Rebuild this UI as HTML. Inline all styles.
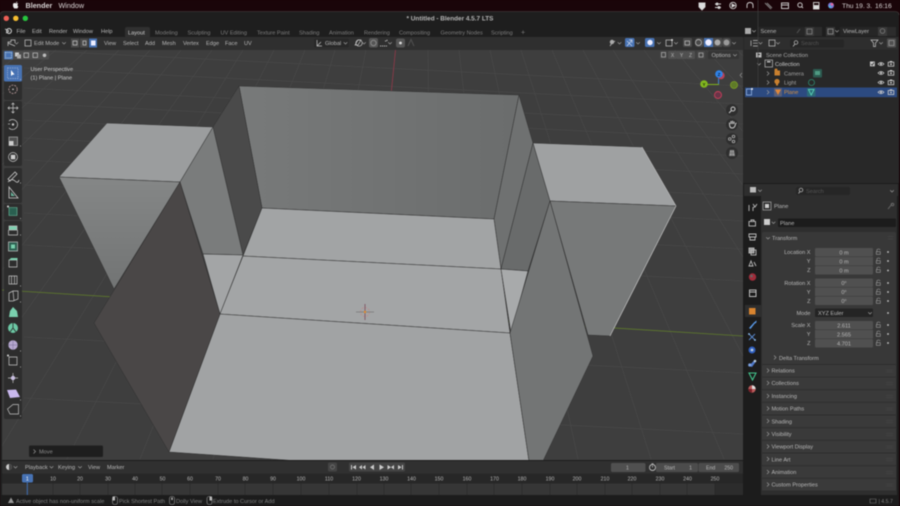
<!DOCTYPE html>
<html><head><meta charset="utf-8">
<style>
html,body{margin:0;padding:0;background:#1a0509;width:900px;height:506px;overflow:hidden}
svg{display:block;filter:blur(.42px)}
text{font-family:"Liberation Sans",sans-serif;font-size:5.6px;fill:#b8b8b8}
.d{fill:#7e7e7e}.s{font-size:5.2px}.c{text-anchor:middle}.r{text-anchor:end}
.g line{stroke:#4a4a4a;stroke-width:.6}
.m{stroke:#303030;stroke-width:.5;stroke-linejoin:round}
.i{fill:none;stroke:#c4c4c4;stroke-width:.7}
.p{fill:#3a3a3a}
</style></head><body>
<svg width="900" height="506" viewBox="0 0 900 506" xmlns="http://www.w3.org/2000/svg">
<defs>
<linearGradient id="lf" x1="0" y1="0" x2="0" y2="1"><stop offset="0" stop-color="#858787"/><stop offset="1" stop-color="#727474"/></linearGradient>
<linearGradient id="bw" x1="0" y1="0" x2="1" y2="0"><stop offset="0" stop-color="#787a7a"/><stop offset="1" stop-color="#6b6d6d"/></linearGradient>
<clipPath id="vp"><rect x="2" y="50" width="741" height="410"/></clipPath>
<g id="eye"><path d="M-3 0Q0 -3 3 0Q0 3 -3 0Z" fill="none" stroke="#ccc" stroke-width=".7"/><circle r="1" fill="#ccc"/></g>
<g id="cam"><rect x="-2.8" y="-1.8" width="5.6" height="4" fill="none" stroke="#ccc" stroke-width=".8"/><rect x="-1.2" y="-3" width="2.4" height="1.2" fill="#ccc"/><circle cy=".2" r=".9" fill="#ccc"/></g>
<g id="lock"><rect x="-2.2" y="-.3" width="4" height="2.6" fill="none" stroke="#999" stroke-width=".6"/><path d="M-1.6 -.3V-1.8Q-1.6 -3 0 -3Q1.4 -3 1.6 -2" fill="none" stroke="#999" stroke-width=".6"/></g>
<g id="arrow"><path d="M-1 -2L1 0L-1 2" fill="none" stroke="#999" stroke-width=".7"/></g>
<g id="chev"><path d="M-1.8 -.8L0 1L1.8 -.8" fill="none" stroke="#999" stroke-width=".7"/></g>
</defs>

<!-- mac menu bar -->
<rect width="900" height="506" fill="#1a0509"/>
<path d="M13.5 3.2Q15 2.7 16 3.4Q17 2.7 18.2 3.5Q17 4.6 17.6 5.8L18.3 6.6Q17.6 8.6 16.6 8.6L15.8 8.3L15 8.6Q13.6 8.4 13 6Q12.8 3.8 13.5 3.2ZM15.9 3.1Q16 1.8 17.2 1.5Q17.3 2.8 15.9 3.1Z" fill="#e8e8e8"/>
<text x="25.5" y="8" style="font-size:7.2px;font-weight:bold;fill:#d8d4d4">Blender</text>
<text x="58.5" y="8" style="font-size:7.2px;fill:#d8d4d4">Window</text>
<g fill="none" stroke="#d4d4d4" stroke-width=".9">
<path d="M699 3H705V7L702 10L699 7Z" fill="#ddd"/>
<path d="M715 4H721M715 7.5H721"/><circle cx="717" cy="4" r="1" fill="#ddd"/><circle cx="719" cy="7.5" r="1" fill="#ddd"/>
<circle cx="733" cy="5.5" r="3.2"/><path d="M732 4L735 5.5L732 7Z" fill="#ddd"/>
<path d="M747 8V5.5Q747 2.5 750 2.5Q753 2.5 753 5.5V8"/>
<path d="M765 3L771 9M767 3L772 8" stroke="#888"/>
<rect x="781.5" y="3" width="7" height="5.5"/><path d="M781.5 5H788.5"/>
<circle cx="800" cy="5" r="2.2"/><path d="M801.6 6.6L803 8"/>
<rect x="813.5" y="2.5" width="5.5" height="3"/><rect x="813.5" y="6" width="5.5" height="3" fill="#ddd"/>
</g>
<circle cx="831" cy="5.5" r="3" fill="#7a7ad8"/><circle cx="832" cy="4.3" r="1.3" fill="#e66a9a"/><circle cx="830" cy="6.8" r="1.2" fill="#4ac0d8"/>
<text x="842" y="8" style="font-size:6.7px;fill:#d8d4d4">Thu 19. 3.</text><text x="875" y="8" style="font-size:6.7px;fill:#d8d4d4">16:16</text>

<!-- window -->
<path d="M0 15Q0 11.5 4 11.5H895Q899 11.5 899 15V506H0Z" fill="#1e1e1e"/>
<path d="M0 15Q0 11.5 4 11.5H895Q899 11.5 899 15" fill="none" stroke="#4a4444" stroke-width=".6"/>
<circle cx="6.3" cy="18.3" r="2.7" fill="#ed5f56"/><circle cx="15.8" cy="18.3" r="2.7" fill="#f5bd30"/><circle cx="25.3" cy="18.3" r="2.7" fill="#27c53f"/>
<text x="450" y="20.4" class="c" style="font-size:6.4px;font-weight:bold;fill:#b4b4b4">* Untitled - Blender 4.5.7 LTS</text>

<!-- top bar -->
<circle cx="9" cy="31" r="2.4" fill="none" stroke="#ccc" stroke-width="1.1"/><path d="M5 29L9 31M6 33L9 31" stroke="#ccc" stroke-width=".9"/>
<text x="16.5" y="33">File</text><text x="32" y="33">Edit</text><text x="49" y="33">Render</text><text x="73" y="33">Window</text><text x="101" y="33">Help</text>
<path d="M125 37V29Q125 27 127 27H148Q150 27 150 29V37Z" fill="#303030"/>
<text x="128" y="34.5" style="fill:#d0d0d0">Layout</text>
<text class="d" x="155" y="34.5">Modeling</text><text class="d" x="187.5" y="34.5">Sculpting</text><text class="d" x="220.5" y="34.5">UV Editing</text><text class="d" x="257" y="34.5">Texture Paint</text><text class="d" x="299" y="34.5">Shading</text><text class="d" x="329" y="34.5">Animation</text><text class="d" x="364" y="34.5">Rendering</text><text class="d" x="399" y="34.5">Compositing</text><text class="d" x="440.5" y="34.5">Geometry Nodes</text><text class="d" x="491" y="34.5">Scripting</text><text class="d" x="521" y="34.5" style="font-size:7px">+</text>

<!-- viewport -->
<rect x="2" y="50" width="741" height="410" fill="#3e3e3e"/>
<g clip-path="url(#vp)">
<g class="g">
<line x1="24" y1="50" x2="743" y2="86"/><line x1="24" y1="68" x2="743" y2="104"/><line x1="24" y1="88" x2="743" y2="124"/><line x1="24" y1="103" x2="743" y2="139"/><line x1="24" y1="120" x2="743" y2="156"/><line x1="24" y1="138" x2="743" y2="174"/><line x1="24" y1="160" x2="743" y2="196"/><line x1="24" y1="185" x2="743" y2="221"/><line x1="24" y1="213" x2="743" y2="249"/><line x1="24" y1="245" x2="743" y2="281"/><line x1="24" y1="337" x2="743" y2="373"/><line x1="24" y1="398" x2="743" y2="434"/>
<line x1="25" y1="50" x2="-517" y2="459"/><line x1="56" y1="50" x2="-444" y2="459"/><line x1="87" y1="50" x2="-371" y2="459"/><line x1="119" y1="50" x2="-298" y2="459"/><line x1="150" y1="50" x2="-225" y2="459"/><line x1="181" y1="50" x2="-152" y2="459"/><line x1="212" y1="50" x2="-79" y2="459"/><line x1="243" y1="50" x2="-6" y2="459"/><line x1="274" y1="50" x2="67" y2="459"/><line x1="305" y1="50" x2="140" y2="459"/><line x1="335" y1="50" x2="213" y2="459"/><line x1="366" y1="50" x2="286" y2="459"/><line x1="428" y1="50" x2="432" y2="459"/><line x1="459" y1="50" x2="505" y2="459"/><line x1="490" y1="50" x2="578" y2="459"/><line x1="521" y1="50" x2="651" y2="459"/><line x1="552" y1="50" x2="724" y2="459"/><line x1="583" y1="50" x2="797" y2="459"/><line x1="613" y1="50" x2="870" y2="459"/><line x1="644" y1="50" x2="943" y2="459"/><line x1="675" y1="50" x2="1016" y2="459"/><line x1="706" y1="50" x2="1089" y2="459"/><line x1="737" y1="50" x2="1162" y2="459"/>
</g>
<line x1="2" y1="290" x2="743" y2="336" stroke="#5f7a2c" stroke-width=".8"/>
<line x1="395.5" y1="50" x2="391" y2="95" stroke="#95384a" stroke-width=".8"/>

<!-- mesh -->
<g class="m">
<polygon points="239,86 519,95 494,219 262,208" fill="url(#bw)"/>
<polygon points="239,86 213,127 243,255 262,208" fill="#4a4a4a"/>
<polygon points="519,95 533,143 501,269 494,219" fill="#6f7171"/>
<polygon points="533,143 550,201 528,271 501,269" fill="#696b6b"/>
<polygon points="107,123 213,127 180,182 59,177" fill="#9b9d9e"/>
<polygon points="59,177 180,182 114,289" fill="url(#lf)"/>
<polygon points="213,127 180,182 203,254 243,255" fill="#7a7c7c"/>
<polygon points="203,254 243,255 220,314" fill="#a3a5a6"/>
<polygon points="262,208 494,219 501,269 243,256" fill="#a2a4a5"/>
<polygon points="243,256 501,269 510,333 220,314" fill="#a3a5a6"/>
<polygon points="501,269 528,271 511,333" fill="#a8aaab"/>
<polygon points="220,314 510,333 529,461 300,461 169,452" fill="#a1a3a4"/>
<polygon points="180,182 220,314 169,452 94,323" fill="#4a4747"/>
<polygon points="533,143 642,147 676,206 550,201" fill="#9fa1a2"/>
<polygon points="550,201 676,206 610,336 588,335" fill="#777979"/>
<polygon points="550,201 593,356 543,461 529,461 510,333" fill="#737575"/>
</g>
<line x1="642" y1="147" x2="676" y2="206" stroke="#cfcfcf" stroke-width=".6"/>
<line x1="676" y1="206" x2="610" y2="336" stroke="#d8d8d8" stroke-width=".6"/>
</g>

<!-- 3D cursor -->
<g transform="translate(365 312)">
<circle r="4.5" fill="none" stroke="#c08a8a" stroke-width=".8" stroke-dasharray="2 1.5"/>
<path d="M-9 0H9" stroke="#777" stroke-width=".7"/><path d="M0 -8V8" stroke="#7a4a5a" stroke-width=".8"/>
<circle r="1.2" fill="#e08a30"/>
</g>

<!-- viewport header -->
<rect x="2" y="37" width="741" height="13" fill="#2f2f2f"/>
<path d="M8 46V42H11V40H15V43M8 43L15 46" class="i"/>
<rect x="25" y="40" width="6" height="6" class="i"/>
<use href="#chev" x="16.5" y="43"/>
<text x="34" y="45">Edit Mode</text><use href="#chev" x="64" y="43"/>
<rect x="71" y="38.5" width="8" height="9" fill="#4a4a4a"/><rect x="80" y="38.5" width="8" height="9" fill="#4a4a4a"/><rect x="89" y="38.5" width="8" height="9" fill="#4772b3"/>
<path d="M73 41H77V45H73Z" class="i"/><path d="M83 41H86V45H83Z" class="i"/><rect x="91" y="40.5" width="4.5" height="5" fill="#eef"/>
<text x="104" y="45">View</text><text x="123" y="45">Select</text><text x="145" y="45">Add</text><text x="162" y="45">Mesh</text><text x="183" y="45">Vertex</text><text x="206" y="45">Edge</text><text x="225" y="45">Face</text><text x="244" y="45">UV</text>
<rect x="314" y="38.5" width="35" height="9" rx="2" fill="#282828"/>
<path d="M317 40V46H322M317 46L321 42" class="i"/><text x="325" y="45">Global</text><use href="#chev" x="345.5" y="43"/>
<path d="M355 45L358 40H361L358 45Z" class="i"/><circle cx="359" cy="43" r="3.2" class="i"/><use href="#chev" x="364" y="43"/>
<rect x="369" y="38" width="9" height="9.5" rx="2" fill="#555"/><circle cx="373.5" cy="43" r="2.7" fill="none" stroke="#888"/>
<path d="M380 46H387M385 41H387V39" fill="none" stroke="#bbb" stroke-width="1" stroke-dasharray="1.2 .8"/><use href="#chev" x="390" y="43"/>
<rect x="396" y="38.5" width="9" height="9" rx="2" fill="#555"/><circle cx="400.5" cy="43" r="1.4" fill="#ddd"/>
<path d="M408 46L411 39.5L414 46" fill="none" stroke="#4f4f4f"/>

<circle cx="612" cy="42" r="2.2" fill="#aaa"/><path d="M610 46L612 43L615 41" stroke="#aaa" fill="none"/><use href="#chev" x="619.5" y="43"/>
<rect x="625" y="38" width="9.5" height="9" rx="1.5" fill="#4772b3"/><path d="M627 46L632 40M629 40H632V43M627 41L632 46" fill="none" stroke="#cdd6e8" stroke-width=".7"/>
<use href="#chev" x="638" y="43"/>
<rect x="645" y="38" width="9.5" height="9" rx="1.5" fill="#4772b3"/><circle cx="650" cy="42.5" r="2.7" fill="#eef"/>
<use href="#chev" x="659" y="43"/>
<rect x="666" y="40" width="6" height="6" class="i"/><circle cx="672" cy="40" r="1" fill="#ddd"/><use href="#chev" x="676" y="43"/>
<rect x="683" y="38" width="9" height="9" rx="1.5" fill="#4a4a4a"/><rect x="685" y="41" width="4.5" height="4" class="i"/>
<rect x="695" y="38" width="9" height="9" rx="3" fill="#4a4a4a"/><rect x="704" y="38" width="9" height="9" fill="#4a4a4a"/><rect x="713" y="38" width="9" height="9" fill="#4a4a4a"/><rect x="722" y="38" width="9" height="9" rx="3" fill="#4a4a4a"/>
<circle cx="698.5" cy="42.5" r="3" class="i"/><rect x="704" y="38" width="9" height="9" fill="#4772b3"/><circle cx="708.5" cy="42.5" r="3.2" fill="#eef"/><circle cx="717.5" cy="42.5" r="3" fill="#aaa"/><circle cx="726.5" cy="42.5" r="3" fill="#999"/>
<use href="#chev" x="734" y="43"/>

<!-- mesh select row -->
<rect x="4" y="51" width="9" height="8.5" rx="1.3" fill="#4772b3"/><rect x="5.5" y="52.5" width="6" height="5.5" fill="none" stroke="#cdd" stroke-width=".7" stroke-dasharray="1 .7"/>
<rect x="13" y="51" width="9" height="8.5" fill="#4c4c4c"/><rect x="22" y="51" width="9" height="8.5" fill="#4c4c4c"/><rect x="31" y="51" width="9" height="8.5" fill="#4c4c4c"/><rect x="40" y="51" width="9" height="8.5" rx="1.3" fill="#4c4c4c"/>
<rect x="15" y="52.5" width="4" height="4" fill="#ccc"/><rect x="17" y="54.5" width="4" height="4" fill="#aaa"/>
<rect x="24" y="53" width="4.5" height="4.5" class="i"/><rect x="33" y="53" width="4.5" height="4.5" class="i"/><circle cx="44.5" cy="55.3" r="1.8" fill="#bbb"/>
<text x="30.5" y="71" style="fill:#ccc">User Perspective</text>
<text x="30.5" y="79.3" style="fill:#ccc">(1) Plane | Plane</text>

<!-- xyz options -->
<rect x="660" y="51" width="7" height="8" rx="1" fill="#474747"/><rect x="661.5" y="52.5" width="4" height="4.5" class="i" style="stroke-width:.6"/>
<rect x="668" y="51" width="9" height="8" rx="1" fill="#505050"/><rect x="677" y="51" width="9" height="8" fill="#505050"/><rect x="686" y="51" width="9" height="8" rx="1" fill="#505050"/>
<text x="672.5" y="57" class="c" style="font-size:5px">X</text><text x="681.5" y="57" class="c" style="font-size:5px">Y</text><text x="690.5" y="57" class="c" style="font-size:5px">Z</text>
<rect x="697" y="51" width="8" height="8" rx="1" fill="#474747"/><rect x="699" y="53" width="4" height="4" class="i" style="stroke-width:.6"/>
<rect x="708" y="51" width="31" height="8" rx="1.5" fill="#353535"/>
<text x="711.5" y="57">Options</text><use href="#chev" x="735" y="55"/>
<path d="M742 73L740 75.3L742 77.5" fill="none" stroke="#999" stroke-width=".6"/>

<!-- gizmo -->
<path d="M704 84.5H718.5V74" fill="none" stroke="#7fb31c" stroke-width="1"/><path d="M718.6 84V75" stroke="#3a78d8" stroke-width="1"/>
<circle cx="721" cy="75.5" r="3.7" fill="#b94058"/>
<circle cx="719" cy="74" r="3.8" fill="#2f83e8"/><text x="719" y="75.8" class="c" style="font-size:4.6px;font-weight:bold;fill:#102040">Z</text>
<circle cx="704" cy="84" r="3.8" fill="#82b81f"/><text x="704" y="85.8" class="c" style="font-size:4.6px;font-weight:bold;fill:#20300a">Y</text>
<circle cx="734" cy="85" r="3.5" fill="#5f7a28" stroke="#7da024" stroke-width=".8"/>
<circle cx="718" cy="95" r="3.5" fill="#6a3448" stroke="#c83f5a" stroke-width=".9"/>
<g fill="#2e2e2e"><circle cx="732" cy="110" r="6"/><circle cx="732" cy="124.5" r="6"/><circle cx="732" cy="139" r="6"/><circle cx="732" cy="153" r="6"/></g>
<circle cx="733" cy="109" r="2" fill="none" stroke="#ccc" stroke-width="1"/><path d="M731.5 110.5L729 113" stroke="#ccc" stroke-width="1"/>
<path d="M729.5 124V122.5M731 124V121M732.5 124V120.8M734 124V121.5M729.5 124Q729.5 128 732 128Q735 128 735.5 124L736.3 122.8" fill="none" stroke="#ccc" stroke-width="1"/>
<circle cx="729.8" cy="139" r="1.3" class="i"/><circle cx="733.5" cy="136.5" r="1.3" class="i"/><circle cx="733.5" cy="141.5" r="1.3" class="i"/>
<path d="M729 156L730 150H734L735 156ZM729 153H735M732 150V156" fill="#999" stroke="#555" stroke-width=".4"/>

<!-- toolbar -->
<rect x="4" y="65" width="18" height="35" rx="1.5" fill="#2d2d2d"/>
<rect x="4" y="65" width="18" height="16.5" rx="1.5" fill="#4772b3"/>
<rect x="7.5" y="68" width="10.5" height="10.5" fill="none" stroke="#a5b9da" stroke-width=".7" stroke-dasharray="1.3 1"/>
<path d="M11 70V76L12.5 74.8L14.5 74.5Z" fill="#fff"/>
<circle cx="13" cy="89.3" r="4.2" fill="none" stroke="#b89a9a" stroke-width=".8" stroke-dasharray="2 1"/><circle cx="13" cy="89.3" r=".8" fill="#ccc"/>
<rect x="4" y="101" width="18" height="65" rx="1.5" fill="#2d2d2d"/>
<path d="M13 103V113M8 108H18M11.5 104.500L13 103L14.500 104.500M11.500 111.500L13 113L14.500 111.500M9.500 106.500L8 108L9.500 109.500M16.500 106.500L18 108L16.500 109.500" class="i"/>
<path d="M9 121A5 5 0 1 1 9 128" class="i"/><circle cx="13" cy="124.500" r="1.200" fill="#ccc"/><path d="M8 124H10" class="i"/>
<rect x="9" y="137" width="8.500" height="8.500" fill="#505050" stroke="#bbb" stroke-width=".6"/><rect x="9" y="141" width="4.500" height="4.500" fill="#ccc"/>
<circle cx="13" cy="157" r="4.500" class="i"/><rect x="10.800" y="154.800" width="4.500" height="4.500" fill="#ccc"/>
<rect x="4" y="168" width="18" height="35" rx="1.500" fill="#2d2d2d"/>
<path d="M8 179L15 172L17 174L10 181ZM8 182Q12 178 15 181T19 180" fill="none" stroke="#ccc" stroke-width=".8"/>
<path d="M9 187V198H18Z" fill="none" stroke="#ccc" stroke-width=".8"/><path d="M11 192V196H15Z" fill="#68b49a"/>
<rect x="4" y="204" width="18" height="16" rx="1.500" fill="#2d2d2d"/>
<path d="M9 207.500H17V215.500H9Z" fill="#2a5f50" stroke="#6fc2a2" stroke-width=".6"/><circle cx="8" cy="206.500" r="1" fill="#ddd"/>
<rect x="4" y="221" width="18" height="198" rx="1.500" fill="#2d2d2d"/>
<path d="M9 226H17V230H9Z" fill="#7fd0b0"/><path d="M8.500 230V235H17.500V230M9 226H17V230H9Z" class="i"/>
<rect x="8.500" y="242" width="9" height="9" fill="#2c5f50"/><rect x="11" y="244.500" width="4" height="4" fill="#78ceac"/><rect x="8.500" y="242" width="9" height="9" class="i"/>
<path d="M9 260H17V267H9Z" class="i"/><path d="M9 260L11 258H17.500V260Z" fill="#7ad0ae"/>
<path d="M9 276H17V284H9ZM11.500 276V284M14.500 276V284" class="i"/>
<path d="M9 293L13 291H18V299L13 301H9ZM13 291L14 301" class="i"/>
<path d="M9 317L10 311L13 307L17 311L18 317Z" fill="#7ad0ae"/>
<circle cx="13" cy="328" r="5" fill="#6cc8a5"/><path d="M13 328L10 332M13 328L16 332M13 328V323" stroke="#2a2a2a" stroke-width=".8"/>
<circle cx="13" cy="345" r="4.700" fill="#b6a8d0"/><path d="M8.500 345H17.500M13 340.500V349.500" stroke="#776a94" stroke-width=".5"/>
<path d="M9 357H17V365H9Z" class="i"/><circle cx="8" cy="355.500" r="1" fill="#ddd"/>
<path d="M13 373V383M8 378H18" class="i"/><circle cx="13" cy="378" r="2.200" fill="#c8bde0"/>
<path d="M7 390L16 389.500L20 397L10 398Z" fill="#c9b8ee"/>
<path d="M7.500 409L13 404.500H18.500V414H10Z" class="i"/>
<g fill="#bbb"><circle cx="20.500" cy="79.500" r=".5"/><circle cx="20.500" cy="146" r=".5"/><circle cx="20.500" cy="183" r=".5"/><circle cx="20.500" cy="218.500" r=".5"/><circle cx="20.500" cy="235" r=".5"/><circle cx="20.500" cy="286" r=".5"/><circle cx="20.500" cy="302" r=".5"/><circle cx="20.500" cy="351" r=".5"/><circle cx="20.500" cy="367" r=".5"/><circle cx="20.500" cy="400" r=".5"/><circle cx="20.500" cy="416" r=".5"/></g>

<!-- move panel -->
<rect x="29" y="445.500" width="74" height="11.500" rx="1.500" fill="#1e1e1e"/>
<use href="#arrow" x="34.500" y="451.500"/><text x="39" y="453.500" style="fill:#8e8e8e">Move</text>

<!-- timeline -->
<rect x="2" y="460" width="741" height="35" fill="#1c1c1c"/>
<rect x="2" y="461" width="741" height="12.500" fill="#303030"/>
<circle cx="9" cy="467" r="3" fill="#ccc"/><path d="M9 464A3 3 0 0 1 9 470Z" fill="#444"/><use href="#chev" x="15.500" y="467"/>
<text x="25" y="469.200">Playback</text><use href="#chev" x="51.500" y="467"/>
<text x="58" y="469.200">Keying</text><use href="#chev" x="80" y="467"/>
<text x="88" y="469.200">View</text><text x="107" y="469.200">Marker</text>
<rect x="328" y="462.500" width="9" height="9" rx="1.500" fill="#444"/><circle cx="332.500" cy="467" r="2" fill="none" stroke="#777" stroke-width=".7"/>
<rect x="349" y="462.500" width="56" height="9" rx="1.500" fill="#444"/>
<g fill="#ccc"><path d="M351 465V469.500H352V465ZM356 465L352.500 467.200L356 469.500Z"/><path d="M359 467.200L362 465V469.500ZM362.500 467.200L365.500 465V469.500Z"/><path d="M374 464.500L370 467.200L374 470Z"/><path d="M379.500 464.500L384 467.200L379.500 470Z"/><path d="M387.500 465L391 467.200L387.500 469.500ZM391 467.200L394 465V469.500Z"/><path d="M398 465L401.500 467.200L398 469.500ZM402 465V469.500H403V465Z"/></g>
<rect x="611" y="463" width="34.500" height="9" rx="1.500" fill="#505050"/><text x="627.500" y="469.500" class="s c">1</text>
<circle cx="652.500" cy="467.500" r="3" fill="none" stroke="#bbb" stroke-width=".9"/><path d="M652.500 465.500V467.500M651.500 463.700H653.500" stroke="#bbb" stroke-width=".7"/>
<rect x="656" y="463" width="42" height="9" rx="1.500" fill="#4c4c4c"/><rect x="698.500" y="463" width="40.500" height="9" rx="1.500" fill="#4c4c4c"/>
<text x="664" y="469.500" class="s">Start</text><text x="692" y="469.500" class="s r">1</text><text x="706" y="469.500" class="s">End</text><text x="733" y="469.500" class="s r">250</text>

<rect x="2" y="473.500" width="741" height="10" fill="#272727"/>
<rect x="2" y="483.500" width="713" height="11.500" fill="#363636"/><rect x="715" y="483.500" width="28" height="11.500" fill="#2c2c2c"/>
<g stroke="#272727" stroke-width=".6"><path d="M53 483V495M80 483V495M108 483V495M135 483V495M162 483V495M190 483V495M218 483V495M245 483V495M273 483V495M301 483V495M329 483V495M357 483V495M384 483V495M411 483V495M439 483V495M467 483V495M494 483V495M522 483V495M550 483V495M577 483V495M605 483V495M632 483V495M660 483V495M687 483V495M715 483V495"/></g>
<text class="s c" x="53" y="480.700">10</text><text class="s c" x="80" y="480.700">20</text><text class="s c" x="108" y="480.700">30</text><text class="s c" x="135" y="480.700">40</text><text class="s c" x="162.500" y="480.700">50</text><text class="s c" x="190" y="480.700">60</text><text class="s c" x="218" y="480.700">70</text><text class="s c" x="245.500" y="480.700">80</text><text class="s c" x="273" y="480.700">90</text><text class="s c" x="301" y="480.700">100</text><text class="s c" x="329" y="480.700">110</text><text class="s c" x="356.500" y="480.700">120</text><text class="s c" x="384" y="480.700">130</text><text class="s c" x="411.500" y="480.700">140</text><text class="s c" x="439" y="480.700">150</text><text class="s c" x="467" y="480.700">160</text><text class="s c" x="494.500" y="480.700">170</text><text class="s c" x="522" y="480.700">180</text><text class="s c" x="550" y="480.700">190</text><text class="s c" x="577" y="480.700">200</text><text class="s c" x="605" y="480.700">210</text><text class="s c" x="632" y="480.700">220</text><text class="s c" x="660" y="480.700">230</text><text class="s c" x="687.500" y="480.700">240</text><text class="s c" x="715" y="480.700">250</text>
<line x1="27.300" y1="480" x2="27.300" y2="495" stroke="#3f6fb5" stroke-width="1"/>
<rect x="22" y="474" width="11" height="8.500" rx="1.500" fill="#4772b3"/><text x="27.300" y="480.500" class="s c" style="fill:#fff">1</text>

<!-- status bar -->
<rect x="0" y="495" width="899" height="11" fill="#1c1c1c"/>
<path d="M8 503L11 497.500L14 503Z" fill="#999"/>
<text x="16" y="503" style="fill:#7e7e7e">Active object has non-uniform scale</text>
<rect x="112.500" y="496.500" width="5" height="8" rx="2" class="i" style="stroke:#999;stroke-width:.6"/><rect x="112.500" y="496.500" width="2.500" height="4" fill="#bbb"/>
<text x="119" y="503" style="fill:#7e7e7e">Pick Shortest Path</text>
<rect x="169.500" y="496.500" width="5" height="8" rx="2" class="i" style="stroke:#999;stroke-width:.6"/><rect x="171.300" y="497.500" width="1.400" height="2.500" fill="#bbb"/>
<text x="176" y="503" style="fill:#7e7e7e">Dolly View</text>
<rect x="207" y="496.500" width="5" height="8" rx="2" class="i" style="stroke:#999;stroke-width:.6"/><rect x="209.500" y="496.500" width="2.500" height="4" fill="#bbb"/>
<text x="213" y="503" style="fill:#7e7e7e">Extrude to Cursor or Add</text>
<path d="M870 499H876V503H870Z" class="i" style="stroke:#777;stroke-width:.6"/>
<text x="878.500" y="503" class="s" style="fill:#7e7e7e">| 4.5.7</text>

<!-- right: scene bar -->
<rect x="743" y="25" width="156" height="12" fill="#1e1e1e"/>
<path d="M745 28H751V34H745Z" fill="#aaa"/><use href="#chev" x="754" y="31"/>
<rect x="758" y="27" width="47" height="9" fill="#262626"/><text x="760.500" y="33">Scene</text>
<path d="M797 33L800 29" stroke="#555"/><rect x="805" y="27" width="9" height="9" fill="#3a3a3a"/><rect x="807" y="29" width="5" height="5" class="i" style="stroke:#888"/><rect x="814" y="27" width="8" height="9" fill="#2c2c2c"/>
<rect x="826" y="27" width="9" height="9" fill="#363636"/><rect x="828" y="29" width="5" height="5" class="i" style="stroke:#999"/><use href="#chev" x="837" y="31"/>
<rect x="840" y="27" width="38" height="9" fill="#262626"/><text x="843" y="33">ViewLayer</text>
<rect x="878" y="27" width="9" height="9" fill="#3a3a3a"/><circle cx="882.500" cy="31" r="2.300" class="i" style="stroke:#888"/><rect x="887" y="27" width="9" height="9" fill="#2c2c2c"/>

<!-- outliner -->
<rect x="743" y="37" width="156" height="146" fill="#282828"/>
<rect x="744" y="37" width="154" height="12.500" fill="#2e2e2e"/>
<path d="M751 40.500V46M753 40.500H758M753 43.200H758M753 46H758" class="i"/><use href="#chev" x="760.500" y="43"/>
<rect x="769" y="40" width="6" height="6" class="i"/><use href="#chev" x="778" y="43"/>
<rect x="790" y="39.500" width="54" height="8" rx="2" fill="#262626"/><circle cx="796" cy="42.500" r="1.800" class="i"/><path d="M795 44L793 46.500" class="i"/><text x="801" y="45" style="fill:#555">Search</text>
<path d="M871 40H878L875.500 43V46.500H873.500V43Z" class="i"/><use href="#chev" x="881" y="43"/>
<rect x="887" y="38.500" width="9" height="9" rx="1" fill="#505050"/><rect x="889" y="40.500" width="5" height="5" class="i" style="stroke:#999"/>

<rect x="756" y="52.500" width="5.500" height="5" fill="#bbb"/><rect x="757.500" y="54" width="2.500" height="1" fill="#282828"/>
<text x="766" y="57" style="fill:#aaa">Scene Collection</text>
<use href="#chev" x="759" y="64"/>
<rect x="765" y="60" width="7.500" height="7" fill="none" stroke="#bbb" stroke-width=".7"/><rect x="767" y="61" width="3.500" height="1.500" fill="#bbb"/>
<text x="775" y="66" style="fill:#ccc">Collection</text>
<rect x="870" y="61.500" width="4.800" height="4.800" fill="#ccc"/><path d="M871 64L872.200 65.200L874 62.500" fill="none" stroke="#222" stroke-width=".7"/>
<use href="#eye" x="881" y="64"/><use href="#cam" x="891" y="64"/>
<line x1="758" y="68" x2="758" y2="92" stroke="#3f3f3f" stroke-width=".7"/>
<use href="#arrow" x="768" y="73.500"/>
<rect x="774.500" y="70.500" width="5.500" height="5" fill="#c9802f"/><circle cx="776" cy="70" r="1.500" fill="#c9802f"/><text x="784" y="75.300" style="fill:#a0a0a0">Camera</text>
<rect x="813" y="69" width="9" height="8.500" rx="1" fill="#2c5a50"/><rect x="815" y="71" width="5" height="4" fill="#4f9a82"/>
<use href="#eye" x="881" y="73"/><use href="#cam" x="891" y="73"/>
<use href="#arrow" x="768" y="82.500"/>
<circle cx="777" cy="81.500" r="2.600" fill="#c9802f"/><rect x="776" y="84" width="2" height="1.500" fill="#c9802f"/><text x="784" y="84.600" style="fill:#a0a0a0">Light</text>
<circle cx="811.500" cy="82.500" r="3" fill="none" stroke="#2e8a70" stroke-width=".8"/>
<use href="#eye" x="881" y="82.500"/><use href="#cam" x="891" y="82.500"/>

<rect x="745" y="87.500" width="152" height="9.700" fill="#2c4a80"/>
<rect x="746.500" y="89" width="5" height="6" class="i" style="stroke:#9fc0ee"/><circle cx="752" cy="89" r="1" fill="#eee"/>
<use href="#arrow" x="768" y="92.300"/>
<rect x="774" y="88" width="8" height="8.500" rx="1" fill="#5a5f78"/><path d="M775 89.500H781L778 95Z" fill="#e0883a"/><text x="784" y="94.200" style="fill:#d8923f">Plane</text>
<rect x="807" y="88" width="8.500" height="8.500" rx="1" fill="#2c6a78"/><path d="M808.500 89.500H814L811.200 95Z" fill="none" stroke="#5fe0c0" stroke-width=".8"/>
<use href="#eye" x="881" y="92.300"/><use href="#cam" x="891" y="92.300"/>

<!-- properties -->
<rect x="743" y="183" width="156" height="312" fill="#1c1c1c"/>
<rect x="744" y="184" width="154" height="12" fill="#2e2e2e"/>
<rect x="750" y="187" width="6" height="5.500" fill="#bbb"/><use href="#chev" x="760" y="190.500"/>
<rect x="796" y="187" width="54" height="8" rx="2" fill="#262626"/><circle cx="801" cy="190" r="1.800" class="i"/><path d="M800 191.500L798.500 193.500" class="i"/><text x="806" y="192.800" style="fill:#555">Search</text>
<use href="#chev" x="892" y="191"/>
<rect x="761" y="196" width="136" height="299" fill="#2e2e2e"/>

<!-- prop tabs -->
<g fill="none" stroke="#bbb" stroke-width=".9">
<path d="M749 205V211M753 204L755 207L753 207.500V211M757 204L755 207"/>
<rect x="749" y="221.500" width="6.500" height="4.500"/><path d="M751 221.500V220H754V221.500"/>
<path d="M749 234H756V237H749ZM750 237V240H755V237"/>
<rect x="749" y="248" width="5" height="5" fill="#999"/><rect x="751" y="250" width="5" height="5"/>
<path d="M751 261L753 266H749ZM754 262L756 266"/>
</g>
<circle cx="752.500" cy="277" r="3.700" fill="#9f2c3a"/><circle cx="751.500" cy="276" r="1.300" fill="#666"/>
<rect x="749.500" y="290" width="6.500" height="6.500" fill="none" stroke="#bbb"/><path d="M749.500 292H756" stroke="#bbb"/>
<rect x="745" y="305" width="16" height="12" fill="#2e2e2e"/><rect x="749" y="308" width="6.500" height="6.500" fill="#d8842f"/>
<path d="M749 328L754 322.500L756.500 320.500Q757 323 754.800 323.500L750.500 329Z" fill="#5a9bea"/>
<path d="M749 334L755 340M749 340L755 334" stroke="#5a8ad0" stroke-width=".9"/><circle cx="749" cy="334" r=".9" fill="#9cf"/><circle cx="755" cy="340" r=".9" fill="#9cf"/>
<circle cx="752" cy="350" r="3.500" fill="#2f5fc0"/><circle cx="752" cy="350" r="1.400" fill="#bcd"/>
<path d="M749 366L754 360.500L756 361.500L752 367Z" fill="#4f78c8"/><circle cx="749.800" cy="365" r="1.600" fill="#7aa0e0"/><circle cx="755" cy="361" r="1.300" fill="#bcd"/>
<path d="M749 373H756L752.500 380Z" fill="none" stroke="#42c08a" stroke-width="1.100"/>
<circle cx="752" cy="389" r="3.700" fill="#b85a5a"/><path d="M752 385.300A3.700 3.700 0 0 1 755.700 389H752Z" fill="#ddd"/><path d="M752 389V392.700A3.700 3.700 0 0 1 748.300 389Z" fill="#7a1f28"/>

<rect x="763" y="202" width="8" height="8" fill="none" stroke="#aaa" stroke-width=".7"/><rect x="765" y="204" width="4" height="4" fill="#ccc"/>
<text x="774" y="208">Plane</text>
<path d="M888 209L892 204" stroke="#666"/><circle cx="892.500" cy="204.500" r="1.300" fill="none" stroke="#666"/>
<rect x="764" y="219" width="6" height="6" fill="#ccc"/><use href="#chev" x="773.500" y="222.500"/>
<rect x="778" y="218.500" width="118" height="8.500" rx="1" fill="#1c1c1c"/><text x="780" y="225">Plane</text>

<rect x="762" y="232" width="134" height="122" rx="2" fill="#383838"/>
<use href="#chev" x="768" y="238"/><text x="772" y="240">Transform</text>
<path d="M888 236.500H893M888 239H893" stroke="#484848" stroke-width=".6"/>
<g fill="#505050">
<rect x="815" y="248" width="58" height="8.500" rx="1"/><rect x="815" y="257" width="58" height="8.500"/><rect x="815" y="266" width="58" height="8.500" rx="1"/>
<rect x="815" y="278.500" width="58" height="8.500" rx="1"/><rect x="815" y="287.500" width="58" height="8.500"/><rect x="815" y="296.500" width="58" height="8.500" rx="1"/>
<rect x="815" y="321" width="58" height="8.500" rx="1"/><rect x="815" y="330" width="58" height="8.500"/><rect x="815" y="339" width="58" height="8.500" rx="1"/>
</g>
<rect x="815" y="308.500" width="58" height="8.500" rx="1" fill="#242424"/>
<text class="r" x="810.500" y="254">Location X</text><text class="r" x="810.500" y="263">Y</text><text class="r" x="810.500" y="272">Z</text>
<text class="r" x="810.500" y="285">Rotation X</text><text class="r" x="810.500" y="294">Y</text><text class="r" x="810.500" y="303">Z</text>
<text class="r" x="810.500" y="315">Mode</text>
<text class="r" x="810.500" y="327">Scale X</text><text class="r" x="810.500" y="336">Y</text><text class="r" x="810.500" y="345">Z</text>
<text class="c" x="844" y="254.300">0 m</text><text class="c" x="844" y="263.300">0 m</text><text class="c" x="844" y="272.300">0 m</text>
<text class="c" x="844" y="284.800">0°</text><text class="c" x="844" y="293.800">0°</text><text class="c" x="844" y="302.800">0°</text>
<text x="818" y="315">XYZ Euler</text><use href="#chev" x="870" y="313"/>
<text class="c" x="844" y="327.300">2.611</text><text class="c" x="844" y="336.300">2.565</text><text class="c" x="844" y="345.300">4.701</text>
<use href="#lock" x="878.500" y="252"/><use href="#lock" x="878.500" y="261"/><use href="#lock" x="878.500" y="270"/><use href="#lock" x="878.500" y="283"/><use href="#lock" x="878.500" y="292"/><use href="#lock" x="878.500" y="301"/><use href="#lock" x="878.500" y="325"/><use href="#lock" x="878.500" y="334"/><use href="#lock" x="878.500" y="343"/>
<g fill="#ccc"><circle cx="888" cy="252" r=".9"/><circle cx="888" cy="261" r=".9"/><circle cx="888" cy="270.500" r=".9"/><circle cx="888" cy="283" r=".9"/><circle cx="888" cy="292" r=".9"/><circle cx="888" cy="301" r=".9"/><circle cx="888" cy="313" r=".9"/><circle cx="888" cy="325" r=".9"/><circle cx="888" cy="334" r=".9"/><circle cx="888" cy="343" r=".9"/></g>

<rect x="762" y="352" width="134" height="12" fill="#383838"/>
<use href="#arrow" x="775" y="357.500"/><text x="779" y="360">Delta Transform</text>

<g class="p">
<rect x="762" y="365" width="134" height="11.700"/><rect x="762" y="377.500" width="134" height="11.700"/><rect x="762" y="390.200" width="134" height="11.700"/><rect x="762" y="402.800" width="134" height="11.700"/><rect x="762" y="415.500" width="134" height="11.700"/><rect x="762" y="428.200" width="134" height="11.700"/><rect x="762" y="440.800" width="134" height="11.700"/><rect x="762" y="453.500" width="134" height="11.700"/><rect x="762" y="466.200" width="134" height="11.700"/><rect x="762" y="478.800" width="134" height="11.700"/>
</g>
<use href="#arrow" x="768" y="370.500"/><text x="771.500" y="372.500">Relations</text>
<use href="#arrow" x="768" y="383"/><text x="771.500" y="385.200">Collections</text>
<use href="#arrow" x="768" y="396"/><text x="771.500" y="398">Instancing</text>
<use href="#arrow" x="768" y="408.500"/><text x="771.500" y="410.700">Motion Paths</text>
<use href="#arrow" x="768" y="421"/><text x="771.500" y="423.300">Shading</text>
<use href="#arrow" x="768" y="434"/><text x="771.500" y="436">Visibility</text>
<use href="#arrow" x="768" y="446.500"/><text x="771.500" y="448.700">Viewport Display</text>
<use href="#arrow" x="768" y="459"/><text x="771.500" y="461.300">Line Art</text>
<use href="#arrow" x="768" y="472"/><text x="771.500" y="474">Animation</text>
<use href="#arrow" x="768" y="484.500"/><text x="771.500" y="486.700">Custom Properties</text>
<path d="M886 370H893M886 372H893M886 382.500H893M886 384.500H893M886 395.500H893M886 397.500H893M886 408H893M886 410H893M886 420.500H893M886 422.500H893M886 433.500H893M886 435.500H893M886 446H893M886 448H893M886 458.500H893M886 460.500H893M886 471.500H893M886 473.500H893M886 484H893M886 486H893" stroke="#484848" stroke-width=".6"/>
</svg>
</body></html>
